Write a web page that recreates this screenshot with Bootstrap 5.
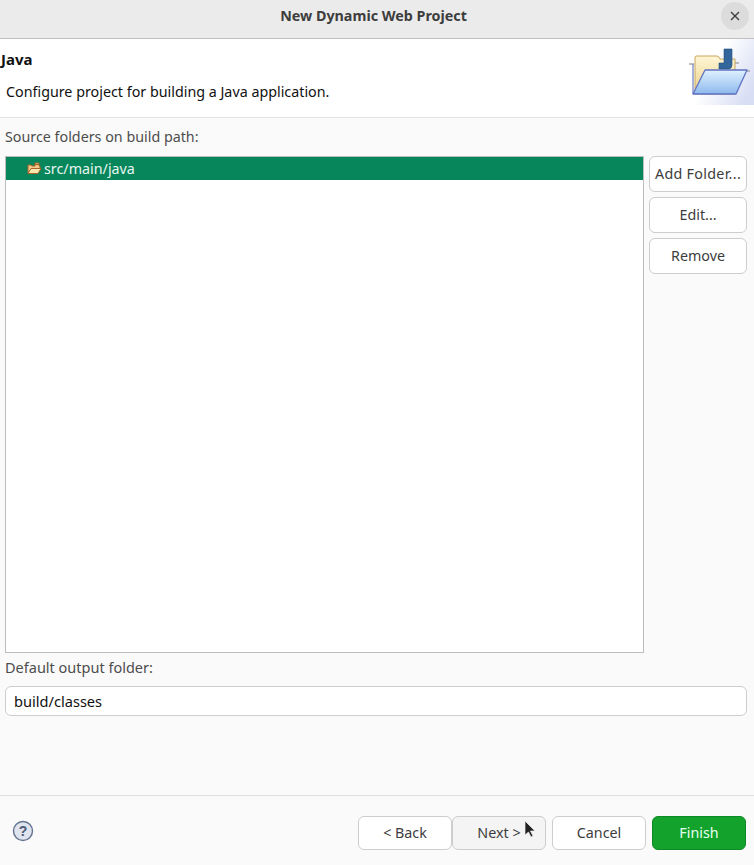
<!DOCTYPE html>
<html lang="en"><head><meta charset="utf-8"><title>New Dynamic Web Project</title>
<link href="https://cdn.jsdelivr.net/npm/bootstrap@5.3.0/dist/css/bootstrap.min.css" rel="stylesheet">
<style>
html,body{height:865px;overflow:hidden}
body{background:#fafafa;font-family:"Noto Sans","Open Sans",sans-serif;font-size:14.3px;color:#3d3d3d;line-height:20px}
.dlg{width:754px;height:865px}
.ttl{height:39px;background:#ebebeb;border-bottom:1px solid #bfbfbf;font-weight:700;color:#3d3d3d;position:relative;padding:0 7px 6px 0;font-size:14.3px}
.xbtn{position:absolute;right:5px;top:2px;width:28px;height:28px;border-radius:50%;background:#dcdcdc}
.hdr{height:79px;background:#fff;border-bottom:1px solid #e0e0e0;color:#111}
.hdr-t{padding:10px 0 0 1px;font-weight:700;height:43px;font-size:15px}
.hdr-d{padding-left:6px}
.wiz{width:66px;height:66px;flex:none}
.bod{padding:9px 7px 0 5px}
.lbl{height:20px;margin-bottom:9px;color:#4d4d4d}
.lbl2{margin-top:4px;font-size:14.5px}
.mainrow{gap:5px}
.tree{height:497px;width:639px;border:1px solid #bdbdbd;background:#fff;flex:none}
.rowsel{height:23px;background:#07865c;color:#e8f6f0;padding-left:21px;gap:2px}
.sidecol{gap:5px}
.sidebtn{width:98px;height:36px;padding:0;font-size:14.3px;line-height:20px;background:#fff;border:1px solid #cdcdcd;border-radius:6px;color:#3d3d3d}
.sidebtn.addf{letter-spacing:.3px}
.field{height:30px;border:1px solid #cdcdcd;border-radius:6px;background:#fff;padding:4px 8px;font-size:14.6px;line-height:20px;color:#111;width:742px}
.field:focus{box-shadow:none;border-color:#cdcdcd}
.ftr{height:70px;flex:none;border-top:1px solid #e0e0e0;padding:20px 8px 0 12px}
.helpic{margin-top:4px}
.fbtn{width:94px;height:34px;padding:0;font-size:14.3px;line-height:20px;background:#fff;border:1px solid #cdcdcd;border-radius:6px;color:#3d3d3d}
.fbtn.nx{background:#f4f4f4}
.fbtn.fin{background:#13a32c;border-color:#0e8a24;color:#e6fff0;margin-left:6px}
.fbtn.cn{margin-left:6px}
.cursor{position:absolute;left:524px;top:820px;width:13px;height:20px}
</style></head><body>
<div class="dlg d-flex flex-column">
  <div class="ttl d-flex align-items-center justify-content-center">New Dynamic Web Project
    <div class="xbtn d-flex align-items-center justify-content-center">
      <svg width="10" height="10" viewBox="0 0 10 10"><path d="M1 1l8 8M9 1l-8 8" stroke="#3d3d3d" stroke-width="1.4" fill="none"/></svg>
    </div>
  </div>
  <div class="hdr d-flex">
    <div class="flex-grow-1">
      <div class="hdr-t">Java</div>
      <div class="hdr-d">Configure project for building a Java application.</div>
    </div>
    <svg class="wiz" viewBox="0 0 66 66">
      <defs>
        <linearGradient id="bgw" x1=".1" y1=".2" x2="1" y2=".7"><stop offset=".35" stop-color="#fff"/><stop offset="1" stop-color="#d8def4"/></linearGradient>
        <linearGradient id="fb" x1="0" y1="0" x2="0" y2="1"><stop offset="0" stop-color="#e0f1ff"/><stop offset="1" stop-color="#8db9ec"/></linearGradient>
        <linearGradient id="fy" x1="0" y1="0" x2="0" y2="1"><stop offset="0" stop-color="#fff6d6"/><stop offset="1" stop-color="#eccf86"/></linearGradient>
      </defs>
      <rect width="66" height="66" fill="url(#bgw)"/>
      <path d="M1 25h5M47 24h4M59 32h3" stroke="#a9a9a9" stroke-width="1.3" fill="none"/>
      <path d="M7 18q0-1 2-1h20q2 0 3 3h15v35H7z" fill="url(#fy)" stroke="#c7a55c" stroke-width="1"/>
      <path d="M5 25V55" stroke="#6f7fc0" stroke-width="1.2" fill="none"/>
      <path d="M36 10h8v16q0 4-4 4H31v-6h5z" fill="#33669b" stroke="#244e7c" stroke-width=".6"/>
      <path d="M5 55L17 31H59L48 55z" fill="url(#fb)" stroke="#5f72c4" stroke-width="1.3" stroke-linejoin="round"/>
    </svg>
  </div>
  <div class="bod flex-grow-1 d-flex flex-column">
    <div class="lbl">Source folders on build path:</div>
    <div class="d-flex mainrow">
      <div class="tree">
        <div class="rowsel d-flex align-items-center">
          <svg width="15" height="13" viewBox="0 0 15 13"><path d="M1 11V3h3l1 1h3V1h4v3h1v2" fill="#f0c98a" stroke="#a8642a" stroke-width="1"/><path d="M8 2.5h4" stroke="#a8642a" stroke-width="1"/><path d="M1 11.5l3-5h10l-3 5z" fill="#fbe7ae" stroke="#a8642a" stroke-width="1"/></svg>
          <span>src/main/java</span>
        </div>
      </div>
      <div class="d-flex flex-column sidecol">
        <button class="btn sidebtn addf" type="button">Add Folder...</button>
        <button class="btn sidebtn" type="button">Edit...</button>
        <button class="btn sidebtn" type="button">Remove</button>
      </div>
    </div>
    <div class="lbl lbl2">Default output folder:</div>
    <input class="form-control field" type="text" value="build/classes">
  </div>
  <div class="ftr d-flex align-items-start">
    <svg width="22" height="22" viewBox="0 0 22 22" class="helpic me-auto"><circle cx="11" cy="11" r="9.5" fill="#dfe4ee" stroke="#64748f" stroke-width="1.4"/><text x="11" y="16" text-anchor="middle" font-size="14" font-weight="700" fill="#4c5a75" font-family="Liberation Sans, sans-serif">?</text></svg>
    <button class="btn fbtn" type="button">&lt; Back</button>
    <button class="btn fbtn nx" type="button">Next &gt;</button>
    <button class="btn fbtn cn" type="button">Cancel</button>
    <button class="btn fbtn fin" type="button">Finish</button>
  </div>
</div>
<svg class="cursor" viewBox="0 0 13 20"><path d="M1 1v14l3.5-3 2.5 5 2-1-2.5-5H11z" fill="#222" stroke="#eee" stroke-width=".7"/></svg>
</body></html>
